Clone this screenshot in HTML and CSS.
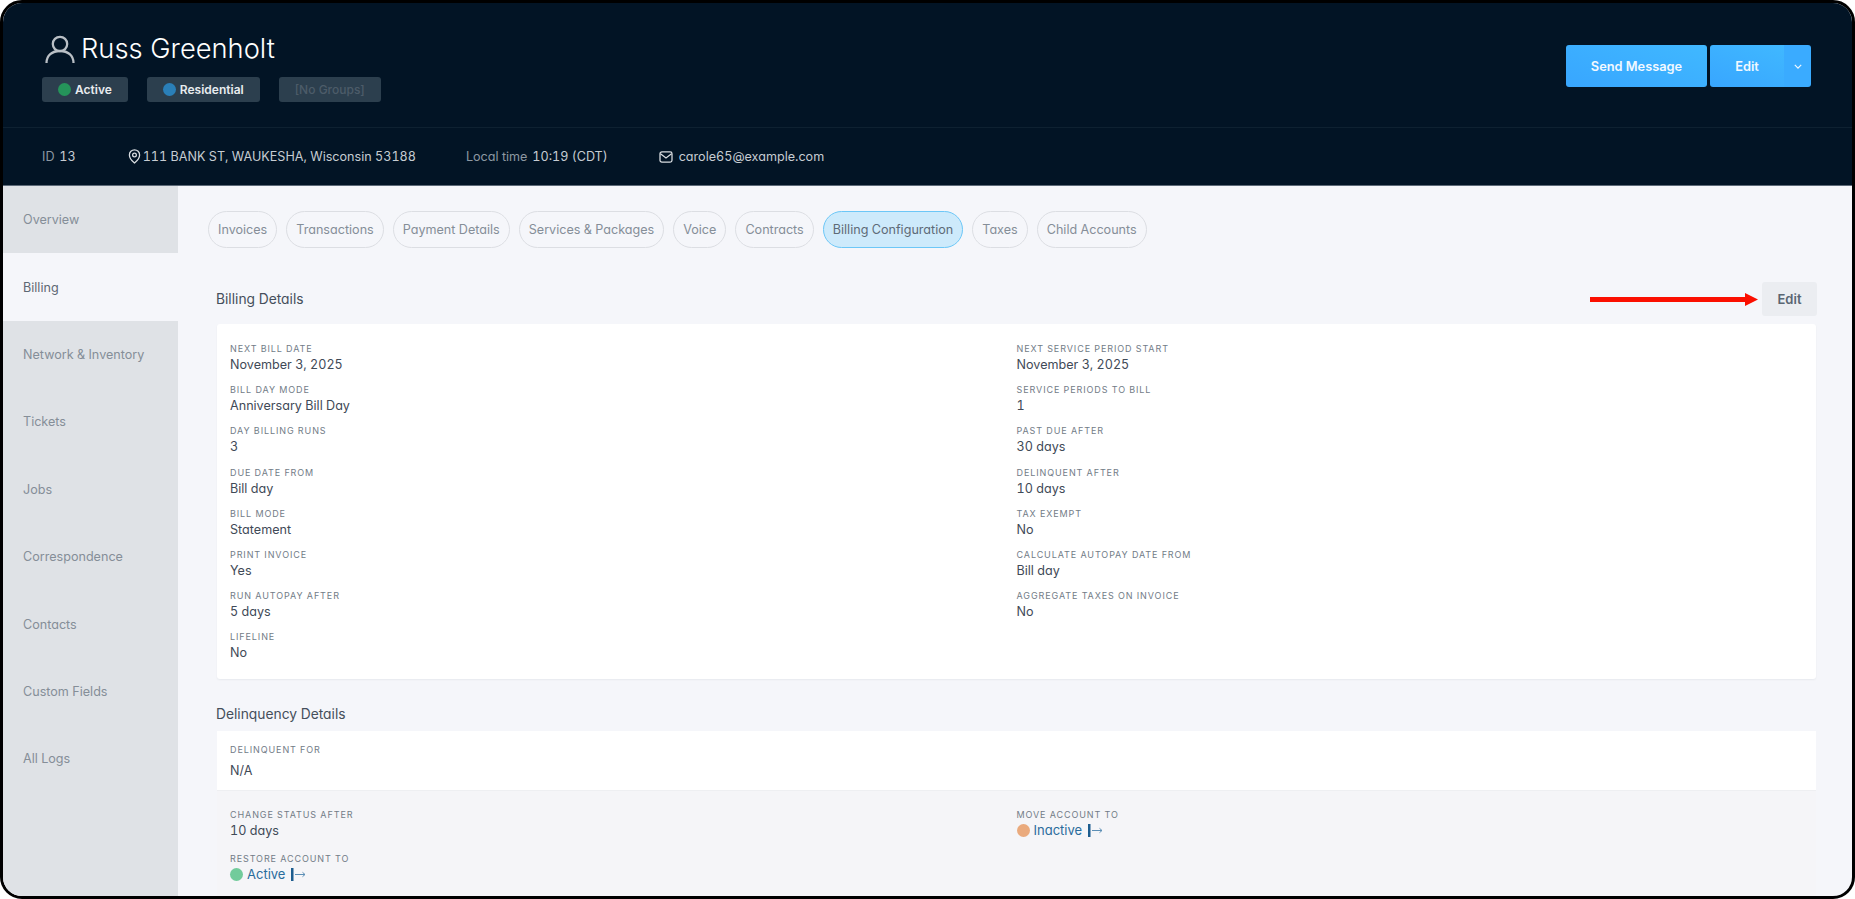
FILE: index.html
```html
<!DOCTYPE html>
<html lang="en">
<head>
<meta charset="utf-8">
<title>Russ Greenholt</title>
<link rel="stylesheet" href="styles.css">
</head>
<body>
<div class="frame">
  <header class="hero">
    <div class="hero-top">
      <div class="identity">
        <h1 class="name">
          <svg class="user-icon" viewBox="0 0 30 30" width="30" height="30"><circle cx="15" cy="10" r="7.2"/><path d="M1.500 29c0-7.500 5.500-12 13.500-12s13.500 4.500 13.500 12"/></svg>
          Russ Greenholt
        </h1>
        <div class="badges">
          <span class="badge"><i class="dot dot-green"></i>Active</span>
          <span class="badge"><i class="dot dot-blue"></i>Residential</span>
          <span class="badge badge-muted">[No Groups]</span>
        </div>
      </div>
      <div class="actions">
        <button class="btn-primary btn-send">Send Message</button>
        <div class="btn-split">
          <button class="btn-primary btn-edit">Edit</button>
          <button class="btn-primary btn-caret" aria-label="More"><svg viewBox="0 0 10 6" width="8" height="5"><path d="M1 1l4 4 4-4"/></svg></button>
        </div>
      </div>
    </div>
    <div class="hero-info">
      <span class="info info-id"><em>ID</em> 13</span>
      <span class="info info-addr"><svg viewBox="0 0 14 16" width="13" height="15"><path d="M7 15S1.500 10.500 1.500 6.300a5.500 5.500 0 0 1 11 0C12.500 10.500 7 15 7 15z"/><circle cx="7" cy="6.300" r="2"/></svg>111 BANK ST, WAUKESHA, Wisconsin 53188</span>
      <span class="info info-time"><em>Local time</em> 10:19 (CDT)</span>
      <span class="info info-mail"><svg viewBox="0 0 15 13" width="14" height="12"><rect x="1" y="1" width="13" height="11" rx="2"/><path d="M1.500 3l6 4.500 6-4.500"/></svg>carole65@example.com</span>
    </div>
  </header>
  <div class="body">
    <nav class="side">
      <a class="side-item">Overview</a>
      <a class="side-item side-active">Billing</a>
      <a class="side-item">Network &amp; Inventory</a>
      <a class="side-item">Tickets</a>
      <a class="side-item">Jobs</a>
      <a class="side-item">Correspondence</a>
      <a class="side-item">Contacts</a>
      <a class="side-item">Custom Fields</a>
      <a class="side-item">All Logs</a>
    </nav>
    <main class="main">
      <div class="tabs">
        <a class="tab">Invoices</a>
        <a class="tab">Transactions</a>
        <a class="tab">Payment Details</a>
        <a class="tab">Services &amp; Packages</a>
        <a class="tab">Voice</a>
        <a class="tab">Contracts</a>
        <a class="tab tab-active">Billing Configuration</a>
        <a class="tab">Taxes</a>
        <a class="tab">Child Accounts</a>
      </div>
      <div class="section-head">
        <h2 class="section-title">Billing Details</h2>
        <svg class="annot-arrow" viewBox="0 0 168 13" width="168" height="13"><rect x="0" y="4" width="158" height="5" fill="#fb0f00"/><path d="M155 0l13 6.500-13 6.500z" fill="#fb0f00"/></svg>
        <button class="btn-soft">Edit</button>
      </div>
      <section class="card details">
        <div class="col">
          <div class="field"><div class="label">Next Bill Date</div><div class="value">November 3, 2025</div></div>
          <div class="field"><div class="label">Bill Day Mode</div><div class="value">Anniversary Bill Day</div></div>
          <div class="field"><div class="label">Day Billing Runs</div><div class="value">3</div></div>
          <div class="field"><div class="label">Due Date From</div><div class="value">Bill day</div></div>
          <div class="field"><div class="label">Bill Mode</div><div class="value">Statement</div></div>
          <div class="field"><div class="label">Print Invoice</div><div class="value">Yes</div></div>
          <div class="field"><div class="label">Run Autopay After</div><div class="value">5 days</div></div>
          <div class="field"><div class="label">Lifeline</div><div class="value">No</div></div>
        </div>
        <div class="col">
          <div class="field"><div class="label">Next Service Period Start</div><div class="value">November 3, 2025</div></div>
          <div class="field"><div class="label">Service Periods To Bill</div><div class="value">1</div></div>
          <div class="field"><div class="label">Past Due After</div><div class="value">30 days</div></div>
          <div class="field"><div class="label">Delinquent After</div><div class="value">10 days</div></div>
          <div class="field"><div class="label">Tax Exempt</div><div class="value">No</div></div>
          <div class="field"><div class="label">Calculate Autopay Date From</div><div class="value">Bill day</div></div>
          <div class="field"><div class="label">Aggregate Taxes On Invoice</div><div class="value">No</div></div>
        </div>
      </section>
      <h2 class="section-title section-title-2">Delinquency Details</h2>
      <section class="delinq-top">
        <div class="label">Delinquent For</div>
        <div class="value value-spaced">N/A</div>
      </section>
      <section class="delinq-rest">
        <div class="col">
          <div class="field"><div class="label">Change Status After</div><div class="value">10 days</div></div>
          <div class="field"><div class="label">Restore Account To</div><div class="value link"><i class="dot dot-mint"></i>Active<svg class="go" viewBox="0 0 15 13" width="15" height="13"><rect x="0" y="0" width="2.500" height="13"/><path d="M4 6.500h10M11.500 4.300L14 6.500l-2.500 2.200"/></svg></div></div>
        </div>
        <div class="col">
          <div class="field"><div class="label">Move Account To</div><div class="value link"><i class="dot dot-orange"></i>Inactive<svg class="go" viewBox="0 0 15 13" width="15" height="13"><rect x="0" y="0" width="2.500" height="13"/><path d="M4 6.500h10M11.500 4.300L14 6.500l-2.500 2.200"/></svg></div></div>
        </div>
      </section>
    </main>
  </div>
</div>
</body>
</html>
```
FILE: styles.css
```css
* { box-sizing: border-box; }
html, body { margin: 0; height: 100%; background: #fff; overflow: hidden; }
body {
  font-family: "Inter", "Liberation Sans", sans-serif; color: #3f4a57;
  font-feature-settings: "cv11", "tnum";
}
.frame {
  height: 899px; width: 1855px; border: 3px solid #000; border-radius: 22px;
  overflow: hidden; display: flex; flex-direction: column; background: #f5f6fa;
}
.hero { background: #021425; flex: 0 0 183px; display: flex; flex-direction: column; border-bottom: 1px solid #5d6a78; }
.hero-top { flex: 0 0 125px; display: flex; justify-content: space-between; border-bottom: 1px solid #0e2131; padding: 0 41px 0 39px; }
.name { margin: 30px 0 0 3px; font-weight: 300; font-size: 27.300px; line-height: 32px; color: #fff; display: flex; align-items: center; gap: 6px; font-feature-settings: normal; }
.user-icon { fill: none; stroke: #b9bfc5; stroke-width: 2.300; flex: none; }
.badges { display: flex; gap: 19px; margin-top: 12px; }
.badge { height: 25px; padding: 0 16px; background: #2c3f4e; border-radius: 3px; font-size: 12px; font-weight: 600; color: #e8ecef; display: flex; align-items: center; gap: 4px; font-feature-settings: normal; }
.badge-muted { color: #4c5c69; font-weight: 500; }
.dot { width: 13px; height: 13px; border-radius: 50%; display: inline-block; flex: none; }
.dot-green { background: #25945a; }
.dot-blue { background: #2a7fb8; }
.dot-mint { background: #72cb9b; }
.dot-orange { background: #eaaa7d; }
.actions { display: flex; gap: 3px; margin-top: 42px; height: 42px; }
.btn-primary { border: 0; background: linear-gradient(20deg, #38a6ff, #40b8ff); color: #f2f9ff; font: 600 12.800px "Inter", sans-serif; padding: 0; height: 42px; }
.btn-send { width: 141px; border-radius: 3px; }
.btn-split { display: flex; }
.btn-edit { width: 74px; border-radius: 3px 0 0 3px; }
.btn-caret { width: 27px; border-radius: 0 3px 3px 0; display: flex; align-items: center; justify-content: center; background: #3aabff; }
.btn-caret svg { fill: none; stroke: #f2f9ff; stroke-width: 1.500; }
.hero-info { flex: 1; display: flex; align-items: center; padding: 0 39px; font-size: 12.600px; color: #c6ccd2; }
.info { display: flex; align-items: center; white-space: pre; }
.info em { font-style: normal; color: #8d98a2; margin-right: 1.500px; }
.info svg { fill: none; stroke: #d8dce0; stroke-width: 1.400; flex: none; }
.info-addr { margin-left: 52px; gap: 2px; }
.info-time { margin-left: 50px; }
.info-mail { margin-left: 51px; gap: 6px; }
.body { flex: 1; display: flex; min-height: 0; }
.side { flex: 0 0 175px; background: #dfe2e6; display: flex; flex-direction: column; }
.side-item { flex: 0 0 67.400px; display: flex; align-items: center; padding-left: 20px; font-size: 12.600px; color: #858e98; }
.side-active { background: #f5f6fa; color: #5e6873; }
.main { flex: 1; padding: 25px 36px 0 39px; min-width: 0; }
.tabs { display: flex; gap: 9px; margin-left: -9px; }
.tab { height: 37px; padding: 0 9px; border: 1.500px solid #dcdee3; border-radius: 19px; font-size: 12.600px; color: #858e98; display: flex; align-items: center; white-space: nowrap; }
.tab-active { background: #cdeafb; border-color: #6cc7f7; color: #5e6b78; }
.section-head { display: flex; align-items: center; margin-top: 34px; height: 34px; margin-right: -1px; }
.section-title { margin: 0 0 0 -1px; font-size: 13.800px; font-weight: 400; color: #454f5b; }
.annot-arrow { margin-left: auto; margin-right: 4px; }
.btn-soft { width: 55px; height: 34px; border: 0; border-radius: 3px; background: #ebedf1; color: #5a6673; font: 600 13px "Inter", sans-serif; }
.card { background: #fff; border-radius: 3px; box-shadow: 0 1px 2px rgba(20,30,50,.06); }
.details { margin-top: 8px; height: 355px; display: grid; grid-template-columns: 1fr 1fr; padding: 19px 13px 0; }
.col { display: flex; flex-direction: column; }
.field { height: 41.200px; }
.label { font-size: 9px; letter-spacing: .9px; text-transform: uppercase; color: #727c87; line-height: 12px; }
.value { font-size: 12.600px; line-height: 17px; color: #3f4a57; margin-top: 1px; }
.section-title-2 { margin-top: 26px; line-height: 18px; }
.delinq-top { margin-top: 8px; height: 60px; background: #fff; padding: 13px 13px 0; border-bottom: 1px solid #eeeff2; }
.value-spaced { margin-top: 6px; }
.delinq-rest { background: #f5f5f8; display: grid; grid-template-columns: 1fr 1fr; padding: 18px 13px 0; height: 120px; }
.delinq-rest .field { height: 44px; }
.link { display: flex; align-items: center; gap: 4px; color: #2a6c9c; font-size: 13px; }
.go { margin-left: 2px; fill: #1d5d8f; }
.go path { fill: none; stroke: #5c8fb6; stroke-width: 1; }
```
